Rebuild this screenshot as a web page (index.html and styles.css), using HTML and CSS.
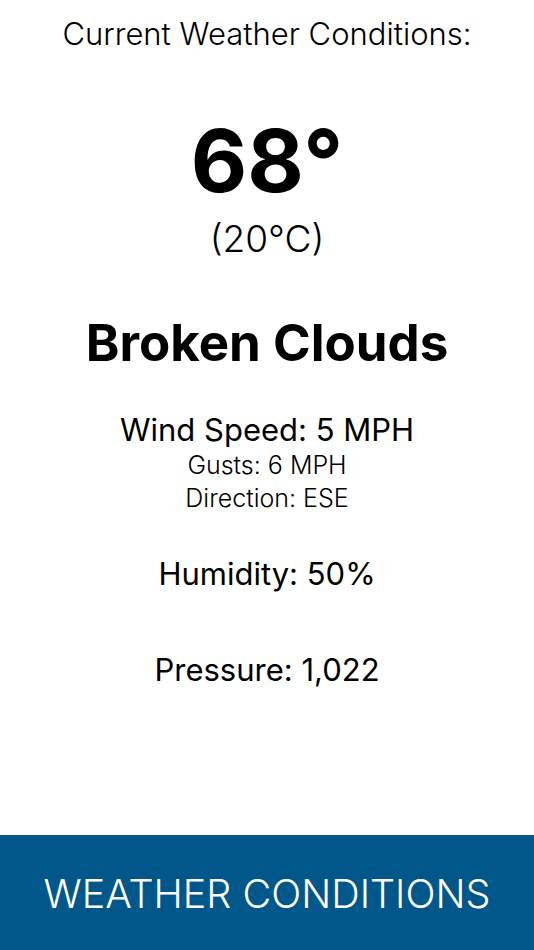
FILE: index.html
```html
<!DOCTYPE html>
<html>
<head>
<meta charset="utf-8">
<link rel="stylesheet" href="styles.css">
</head>
<body>
<div class="screen">
  <main class="content">
    <h1 class="title">Current Weather Conditions:</h1>
    <div class="temp">68°</div>
    <div class="temp-c">(20°C)</div>
    <div class="summary">Broken Clouds</div>
    <div class="wind">
      <div class="wind-speed">Wind Speed: 5 MPH</div>
      <div class="wind-sub">Gusts: 6 MPH</div>
      <div class="wind-sub">Direction: ESE</div>
    </div>
    <div class="stat humidity">Humidity: 50%</div>
    <div class="stat pressure">Pressure: 1,022</div>
  </main>
  <footer class="tabbar">WEATHER CONDITIONS</footer>
</div>
</body>
</html>
```
FILE: styles.css
```css
html, body {
  margin: 0;
  padding: 0;
  background: #ffffff;
}
.screen {
  width: 534px;
  height: 950px;
  display: flex;
  flex-direction: column;
  font-family: Inter, "Noto Sans", sans-serif;
  color: #000;
  text-align: center;
}
.content {
  flex: 1;
  display: flex;
  flex-direction: column;
  align-items: center;
  padding-top: 16px;
}
.title {
  margin: 0;
  font-size: 31px;
  line-height: 36px;
  font-weight: 300;
}
.temp {
  margin-top: 64px;
  font-size: 87px;
  line-height: 90px;
  font-weight: 700;
}
.temp-c {
  margin-top: 11px;
  font-size: 37px;
  line-height: 44px;
  font-weight: 300;
}
.summary {
  margin-top: 50px;
  font-size: 51px;
  line-height: 64px;
  font-weight: 700;
}
.wind {
  margin-top: 36px;
  display: flex;
  flex-direction: column;
  align-items: center;
}
.wind-speed {
  font-size: 31px;
  line-height: 38px;
  font-weight: 400;
}
.wind-sub {
  font-size: 25px;
  line-height: 33px;
  font-weight: 300;
}
.wind-sub:first-of-type {
  margin-top: 1px;
}
.stat {
  font-size: 31px;
  line-height: 38px;
  font-weight: 400;
}
.humidity {
  margin-top: 40px;
}
.pressure {
  margin-top: 58px;
}
.tabbar {
  height: 115px;
  box-sizing: border-box;
  padding-top: 3px;
  background: #02578a;
  color: #fff;
  font-size: 39.5px;
  font-weight: 300;
  display: flex;
  align-items: center;
  justify-content: center;
}
```
